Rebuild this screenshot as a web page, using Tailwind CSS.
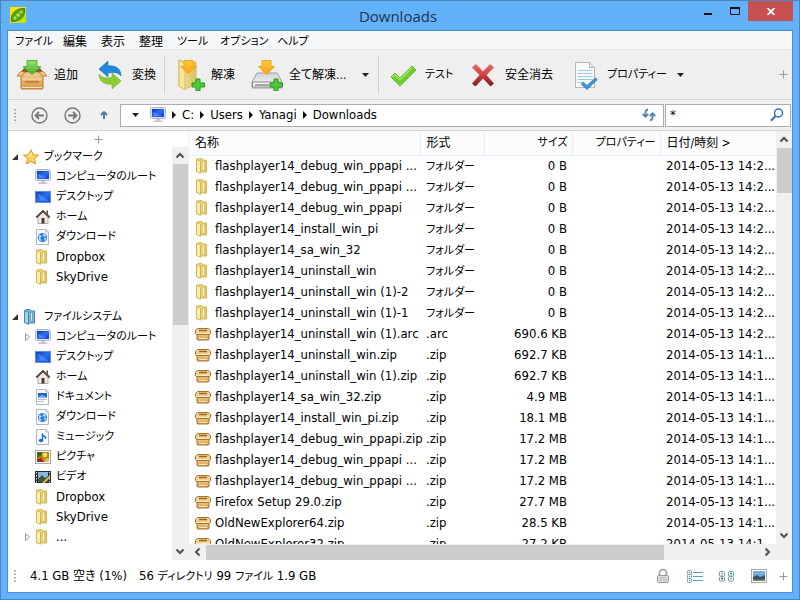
<!DOCTYPE html>
<html lang="ja">
  <head>
    <meta charset="UTF-8" />
    <meta name="viewport" content="width=device-width, initial-scale=1.0" />
    <title>Downloads</title>
    <script src="https://cdn.jsdelivr.net/npm/@tailwindcss/browser@4"></script>
  </head>
  <body class="h-screen overflow-hidden bg-[#64b1fb] border border-[#4a87bd] px-[6px] pb-[6px] flex flex-col text-black text-[13px] leading-5 font-['DejaVu_Sans_Condensed','Noto_Sans','Noto_Sans_CJK_JP',sans-serif] [font-feature-settings:'palt']">

    <!-- Shared icons -->
    <svg class="absolute w-0 h-0">
      <defs>
        <linearGradient id="gFolder" x1="0" y1="0" x2="1" y2="0"><stop offset="0" stop-color="#f5e7a4" /><stop offset="1" stop-color="#dcbf5c" /></linearGradient>
        <linearGradient id="gBox" x1="0" y1="0" x2="0" y2="1"><stop offset="0" stop-color="#f3cd90" /><stop offset="1" stop-color="#d99a4c" /></linearGradient>
        <linearGradient id="gScreen" x1="0" y1="0" x2="1" y2="1"><stop offset="0" stop-color="#0a35b8" /><stop offset=".5" stop-color="#2f6ff0" /><stop offset="1" stop-color="#0a3fd0" /></linearGradient>
        <linearGradient id="gGreen" x1="0" y1="0" x2="0" y2="1"><stop offset="0" stop-color="#9be06c" /><stop offset="1" stop-color="#3fae25" /></linearGradient>
        <linearGradient id="gOrange" x1="0" y1="0" x2="0" y2="1"><stop offset="0" stop-color="#ffcb3d" /><stop offset="1" stop-color="#ff9d14" /></linearGradient>
        <linearGradient id="gRed" x1="0" y1="0" x2="0" y2="1"><stop offset="0" stop-color="#e86a6a" /><stop offset=".5" stop-color="#d04040" /><stop offset="1" stop-color="#7e1b1b" /></linearGradient>
        <linearGradient id="gDisk" x1="0" y1="0" x2="0" y2="1"><stop offset="0" stop-color="#d2d2d2" /><stop offset="1" stop-color="#fbfbfb" /></linearGradient>
      </defs>
      <symbol id="folder" viewBox="0 0 16 16">
        <path d="M1.500 1.500l2-1h3.500v1.500h4.500v12h-7l-3-1z" fill="url(#gFolder)" stroke="#d6bb58" />
        <path d="M1.500 1.500l4 1.500v12.300l-4-1.800z" fill="#f8ecb4" stroke="#d3b54c" />
        <path d="M7.500 3v8.500l2 1.500V4z" fill="#fbf3cc" stroke="#d9bf62" stroke-width=".6" />
      </symbol>
      <symbol id="bluefolder" viewBox="0 0 16 16">
        <path d="M1.500 1.500l2-1h3.500v1.500h4.500v12h-7l-3-1z" fill="#7fb6d8" stroke="#4486ad" />
        <path d="M1.500 1.500l4 1.500v12.300l-4-1.800z" fill="#a8d0e8" stroke="#4486ad" />
        <path d="M7.500 3v8.500l2 1.500V4z" fill="#d3ecf8" stroke="#4486ad" stroke-width=".6" />
      </symbol>
      <symbol id="archive" viewBox="0 0 16 16">
        <path d="M2 7.500h12v5.500q0 1-1 1H3q-1 0-1-1z" fill="url(#gBox)" stroke="#a8742c" />
        <path d="M2.500 2.500h11l2 2v3l-1 1h-13l-1-1v-3z" fill="#f2cf96" stroke="#a8742c" />
        <path d="M4 4.500h8" stroke="#9a641c" stroke-width="1.500" />
        <path d="M2 7.500h12M4 12.500h8" stroke="#fbe8c4" />
      </symbol>
      <symbol id="monitor" viewBox="0 0 16 16">
        <rect x=".5" y=".5" width="15" height="11" rx="1" fill="#dfe3ea" stroke="#b4bac4" />
        <rect x="2" y="2" width="12" height="8" fill="url(#gScreen)" />
        <path d="M3 5l4 2 5 2H4z" fill="#5b9bff" opacity=".6" />
        <path d="M6 12h4v1.500h2.500V15h-9v-1.500H6z" fill="#c3c7cd" />
      </symbol>
      <symbol id="desktop" viewBox="0 0 16 16">
        <rect x=".5" y="2.500" width="15" height="11" fill="url(#gScreen)" stroke="#5d8fe0" />
        <path d="M2 4l6 4 6 4H6z" fill="#5b9bff" opacity=".6" />
      </symbol>
      <symbol id="home" viewBox="0 0 16 16">
        <path d="M3 7l5-4.500L13 7v7.500H3z" fill="#efebe4" stroke="#a39c92" stroke-width=".8" />
        <rect x="6.500" y="9" width="3" height="5.500" fill="#4a3e35" />
        <path d="M1.300 8.500L8 2l6.700 6.500" fill="none" stroke="#54463d" stroke-width="1.800" />
        <path d="M11.500 1.500h1.500v4l-1.500-1.500z" fill="#54463d" />
      </symbol>
      <symbol id="page" viewBox="0 0 16 16">
        <path d="M1.500.5h9.500l2.500 2.500v12.500h-12z" fill="#f7f9fb" stroke="#b3b8be" />
        <path d="M11 .5V3h2.500" fill="#dde1e6" stroke="#b3b8be" />
      </symbol>
      <symbol id="download" viewBox="0 0 16 16">
        <use href="#page" />
        <circle cx="7.500" cy="8.500" r="4.600" fill="#2e7fdc" />
        <path d="M4 6l3 1-2 2 2 3-3-1zM8 4.500l3 1.500-1 2-2-1zM9 9l2.500-.5L10 12z" fill="#b7e0fb" />
      </symbol>
      <symbol id="document" viewBox="0 0 16 16">
        <use href="#page" />
        <rect x="3" y="4" width="9" height="4.500" fill="#1f62c8" />
        <path d="M3 8l4-2 5 2z" fill="#79b4f0" />
        <path d="M3 10.500h9M3 12.500h6" stroke="#a8c2dc" />
      </symbol>
      <symbol id="music" viewBox="0 0 16 16">
        <use href="#page" />
        <path d="M7.500 4.500v7M7.500 4.500q0 2.500 3 3.500v2" fill="none" stroke="#1670d8" stroke-width="1.400" />
        <ellipse cx="6" cy="11.500" rx="2.200" ry="1.700" fill="#1670d8" />
      </symbol>
      <symbol id="picture" viewBox="0 0 16 16">
        <rect x=".5" y="1.500" width="15" height="13" fill="#fff" stroke="#a9a9a9" />
        <rect x="2" y="3" width="12" height="10" fill="#b98a12" />
        <path d="M2 3h5l-1 4-4 2z" fill="#3c6a10" />
        <circle cx="10" cy="6" r="2.300" fill="#ffe45a" />
        <path d="M2 13v-3l4-1 3 4z" fill="#a3281c" /><path d="M9 13l2-4 3 1v3z" fill="#d8c05a" />
      </symbol>
      <symbol id="video" viewBox="0 0 16 16">
        <rect y="2" width="16" height="12" fill="#26282b" />
        <rect x="3" y="3" width="10" height="10" fill="#8db6e4" />
        <path d="M3 10l4-4 3 3 3-2v6H3z" fill="#3c5a3a" />
        <path d="M1.500 3v11M14.500 3v11" stroke="#e8e8e8" stroke-dasharray="1.500 1.500" />
        <path d="M7 14l7-7 1.500 1.500-6 5.500z" fill="#e3b64c" />
      </symbol>
      <symbol id="star" viewBox="0 0 16 16">
        <path d="M8 .8l2.200 4.900 5.300.5-4 3.500 1.200 5.300L8 12.300 3.300 15l1.200-5.300-4-3.500 5.300-.5z" fill="#fdd45c" stroke="#d9962a" />
        <path d="M8 2.800l1.400 3.800-3.400.8z" fill="#fff1b0" />
      </symbol>
      <symbol id="crumb" viewBox="0 0 4 8"><path d="M0 0l4 4-4 4z" fill="#111" /></symbol>
      <symbol id="caret" viewBox="0 0 7 4"><path d="M0 0h7L3.500 4z" fill="#222" /></symbol>
      <symbol id="plus" viewBox="0 0 9 9"><path d="M4.500 0.500v8M.5 4.500h8" stroke="#8b9bab" /></symbol>
      <symbol id="grip" viewBox="0 0 2 12"><path d="M1 0v12" stroke="#8c8c8c" stroke-width="1.500" stroke-dasharray="1.500 2" /></symbol>
      <symbol id="chevron" viewBox="0 0 10 10"><path d="M1.500 7L5 3.500 8.500 7" fill="none" stroke="#505050" stroke-width="2" /></symbol>
    </svg>

    <!-- Title bar -->
    <header class="relative h-[29px] shrink-0 flex items-start">
      <svg class="w-4 h-4 mt-1.5 ml-[3px]" viewBox="0 0 16 16">
        <rect width="16" height="16" fill="#c6e60a" /><path d="M0 0h16L0 16z" fill="#ffe400" />
        <path d="M1.500 14.500C0 7 6 1 14.500 1.500 16 9 10 15 1.500 14.500z" fill="#5aa512" stroke="#3c8408" />
        <g fill="#b6e34a"><circle cx="5" cy="11" r="1.600" /><circle cx="8" cy="8" r="1.800" /><circle cx="11" cy="5" r="1.500" /></g>
      </svg>
      <h1 class="absolute inset-x-0 top-[5px] pr-1 text-center text-[15px] leading-5 text-[#1e3448] font-['Open_Sans',sans-serif]">Downloads</h1>
      <div class="relative ml-auto flex">
        <button aria-label="最小化" class="w-[27px] h-5 flex justify-center items-center"><svg class="w-2 h-2" viewBox="0 0 8 8"><path d="M0 7h8" stroke="#111" stroke-width="2" /></svg></button>
        <button aria-label="最大化" class="w-[27px] h-5 flex justify-center items-center"><svg class="w-[10px] h-2" viewBox="0 0 10 8"><path d="M.5 1v6.500h9V1" fill="none" stroke="#111" /><path d="M0 1h10" stroke="#111" stroke-width="2" /></svg></button>
        <button aria-label="閉じる" class="w-[45px] h-5 bg-[#c75050] flex justify-center items-center"><svg class="w-2 h-[7px]" viewBox="0 0 8 7"><path d="M.5 0l7 7M7.500 0l-7 7" stroke="#fff" stroke-width="1.800" /></svg></button>
      </div>
    </header>

    <div class="flex-1 min-h-0 flex flex-col bg-white border border-[#4a90d0]">
      <!-- Menu -->
      <nav class="h-[18px] shrink-0 bg-[#f5f6f7] flex items-center px-[7px] pt-[3px] gap-[14px] text-[12px] whitespace-nowrap">
        <button class="w-[34px] text-[11px]">ファイル</button>
        <button>編集</button>
        <button>表示</button>
        <button>整理</button>
        <button class="w-[29px] text-[11px]">ツール</button>
        <button class="w-[43px] text-[11px]">オプション</button>
        <button class="w-[29px] text-[11px]">ヘルプ</button>
      </nav>

      <!-- Toolbar -->
      <div class="h-[50px] shrink-0 bg-[#efefef] border-t border-[#e6e6e6] flex items-center text-[12px] whitespace-nowrap">
        <button class="flex items-center gap-1.5 px-2">
          <svg class="w-8 h-8" viewBox="0 0 32 32">
            <path d="M5 13h22v16q0 1-1 1H6q-1 0-1-1z" fill="url(#gBox)" stroke="#b97a36" />
            <path d="M5 13l3-4h16l3 4z" fill="#8f5a24" />
            <path d="M5 12.500L1 17h5l3-4zM27 12.500l4 4.500h-5l-3-4z" fill="#f0c98f" stroke="#b97a36" />
            <path d="M6 20h20M6 28.500h20" stroke="#f9dfb2" /><path d="M9 23h14" stroke="#c8863e" stroke-width="2" />
            <path d="M11 1.500h10v6h4L16 15.500l-9-8h4z" fill="url(#gGreen)" stroke="#55b53a" />
          </svg>
          追加
        </button>
        <button class="flex items-center gap-1.5 px-2">
          <svg class="w-8 h-8" viewBox="0 0 32 32">
            <path d="M5 10l9-8v5c8-1 13 3 13 10-3-4-7-4-13-3v4z" fill="#2089dd" stroke="#0f6fc0" stroke-width=".6" />
            <path d="M27 22l-9 8v-5c-8 1-13-3-13-10 3 4 7 4.500 13 3.500V14z" fill="#8bcc35" stroke="#6fb01e" stroke-width=".6" />
          </svg>
          変換
        </button>
        <i class="w-px h-[38px] bg-[#d2d2d2]"></i>
        <button class="flex items-center gap-1.5 px-2">
          <svg class="w-8 h-8" viewBox="0 0 32 32">
            <path d="M6 1l6 2h11v23l-12 4-5-3z" fill="url(#gFolder)" stroke="#d6bb58" />
            <path d="M6 1l6 4v26l-6-4z" fill="#f8e6a0" stroke="#dcbc5c" />
            <path d="M11 1.500h9v6h3.500L15.500 14.500 7.500 7.500H11z" fill="url(#gOrange)" stroke="#f0a41c" />
            <path d="M23 20h4v4h4.500v4H27v4h-4v-4h-4v-4h4z" fill="#4ecb35" stroke="#259a1a" />
          </svg>
          解凍
        </button>
        <button class="flex items-center gap-1.5 px-2">
          <svg class="w-8 h-8" viewBox="0 0 32 32">
            <path d="M6 14h20l5 9v5q0 1-1 1H2q-1 0-1-1v-5z" fill="url(#gDisk)" stroke="#9c9c9c" />
            <path d="M1.500 23h29v5h-29z" fill="#f7f7f7" stroke="#8b8b8b" /><path d="M4 26h14" stroke="#555" />
            <path d="M11 1.500h9v6h3.500L15.500 15.500 7.500 7.500H11z" fill="url(#gOrange)" stroke="#f0a41c" />
            <path d="M23 20h4v4h4.500v4H27v4h-4v-4h-4v-4h4z" fill="#4ecb35" stroke="#259a1a" />
          </svg>
          <span class="w-14 text-left">全て解凍...</span>
        </button>
        <button aria-label="解凍メニュー" class="w-[25px] flex justify-center"><svg class="w-[7px] h-1"><use href="#caret" /></svg></button>
        <i class="w-px h-[38px] bg-[#d2d2d2]"></i>
        <button class="flex items-center gap-1.5 px-2">
          <svg class="w-8 h-8" viewBox="0 0 32 32"><path d="M4 18l4-4 5 5L25 7l4 4-16 16z" fill="#6fcf2a" stroke="#4fa81a" stroke-width=".8" /><path d="M5.500 18L8 15.500l5 5L25 8.500" fill="none" stroke="#a3e86a" stroke-width="1.500" /></svg>
          <span class="w-[26px] text-[11px] text-left">テスト</span>
        </button>
        <button class="flex items-center gap-1.5 px-2">
          <svg class="w-8 h-8" viewBox="0 0 32 32"><path d="M9 5l7 7.500L23 5l4 3.500-7.500 7.500 7.500 8.500-3.500 3L16 19.500 8.500 27.500 5 24.500l7.500-8.500L5 8.500z" fill="url(#gRed)" /></svg>
          安全消去
        </button>
        <button class="flex items-center gap-1.5 px-2">
          <svg class="w-8 h-8" viewBox="0 0 32 32">
            <path d="M6.500 3.500h14l5 5v20h-19z" fill="#fafafa" stroke="#b5b5b5" /><path d="M20.500 3.500v5h5" fill="#e4e4e4" stroke="#b5b5b5" />
            <path d="M8.500 11.500h15M8.500 14.500h15M8.500 17.500h15M8.500 20.500h15M8.500 23.500h7" stroke="#9dc8e4" />
            <path d="M13 24l5 4.500 9.500-9" fill="none" stroke="#3f90cc" stroke-width="3.500" />
          </svg>
          <span class="w-[53px] text-[11px] text-left">プロパティー</span>
        </button>
        <button aria-label="プロパティーメニュー" class="w-[25px] flex justify-center"><svg class="w-[7px] h-1"><use href="#caret" /></svg></button>
        <button aria-label="追加ボタン" class="ml-auto mr-1"><svg class="w-[9px] h-[9px]"><use href="#plus" /></svg></button>
      </div>

      <!-- Address bar -->
      <div class="h-8 shrink-0 bg-[#f0f0f0] border-y border-[#d5d5d5] flex items-center pr-px">
        <svg class="w-0.5 h-3 ml-1.5 mr-[15px]"><use href="#grip" /></svg>
        <button aria-label="戻る" class="mr-4"><svg class="w-[17px] h-[17px]" viewBox="0 0 17 17" fill="none" stroke="#777"><circle cx="8.500" cy="8.500" r="7.500" stroke-width="1.400" /><path d="M13 8.500H5M8 5L4.500 8.500 8 12" stroke-width="1.800" /></svg></button>
        <button aria-label="進む" class="mr-[19px]"><svg class="w-[17px] h-[17px]" viewBox="0 0 17 17" fill="none" stroke="#777"><circle cx="8.500" cy="8.500" r="7.500" stroke-width="1.400" /><path d="M4 8.500h8M9 5l3.500 3.500L9 12" stroke-width="1.800" /></svg></button>
        <button aria-label="上へ" class="mr-3"><svg class="w-2 h-2" viewBox="0 0 8 8"><path d="M4 8V1M1 4l3-3 3 3" fill="none" stroke="#3c78a8" stroke-width="1.800" /></svg></button>
        <div class="flex-1 h-[23px] bg-white border border-[#abadb3] flex items-center">
          <button aria-label="履歴" class="ml-[11px] mr-[11px]"><svg class="w-[7px] h-1"><use href="#caret" /></svg></button>
          <svg class="w-4 h-4 mr-1.5"><use href="#monitor" /></svg>
          <div class="flex items-center gap-1.5">
            <svg class="w-1 h-2"><use href="#crumb" /></svg><a href="#">C:</a>
            <svg class="w-1 h-2"><use href="#crumb" /></svg><a href="#">Users</a>
            <svg class="w-1 h-2"><use href="#crumb" /></svg><a href="#">Yanagi</a>
            <svg class="w-1 h-2"><use href="#crumb" /></svg><a href="#">Downloads</a>
          </div>
          <button aria-label="更新" class="ml-auto mr-[7px]">
            <svg class="w-[14px] h-[14px]" viewBox="0 0 14 14" fill="none" stroke="#5583b5" stroke-width="1.800"><path d="M6 1.500Q3.500 2 3.500 5v3M.8 6l2.700 2.700L6.200 6" /><path d="M8 12.500q2.500-.5 2.500-3.500V6M7.800 8l2.700-2.700L13.200 8" /></svg>
          </button>
        </div>
        <label class="w-[126px] h-[23px] ml-px bg-white border border-[#abadb3] flex items-center px-1">
          <input type="text" value="*" aria-label="検索" class="flex-1 min-w-0 outline-none" />
          <svg class="w-[14px] h-[14px] mr-0.5" viewBox="0 0 14 14" fill="none" stroke="#3470b4"><circle cx="8.500" cy="5" r="4" stroke-width="1.500" /><path d="M5.500 8L1 12.800" stroke-width="2" /></svg>
        </label>
      </div>

      <div class="flex-1 min-h-0 flex">
        <!-- Folder tree -->
        <aside class="w-[181px] shrink-0 flex flex-col border-r border-[#f0f0f0]">
          <button aria-label="タブを追加" class="h-4 shrink-0 flex justify-center items-center"><svg class="w-[9px] h-[9px]"><use href="#plus" /></svg></button>
          <div class="flex-1 min-h-0 flex">
            <ul id="tree" class="flex-1 min-w-0 overflow-hidden"></ul>
            <div class="w-4 bg-[#f0f0f0] flex flex-col items-center">
              <svg class="w-[10px] h-[17px] shrink-0"><use href="#chevron" /></svg>
              <div class="w-[15px] h-[39%] bg-[#cdcdcd]"></div>
              <svg class="w-[10px] h-[17px] shrink-0 mt-auto rotate-180"><use href="#chevron" /></svg>
            </div>
          </div>
        </aside>

        <!-- File list -->
        <main class="flex-1 min-w-0 flex flex-col">
          <div class="flex-1 min-h-0 flex">
            <div class="flex-1 min-w-0 overflow-hidden">
              <table class="w-full table-fixed whitespace-nowrap">
                <colgroup><col /><col class="w-16" /><col class="w-[88px]" /><col class="w-[88px]" /><col class="w-[116px]" /></colgroup>
                <thead>
                  <tr class="h-6 bg-[#fcfcfc] border-b border-[#e2effc] text-[12px]">
                    <th class="border-r border-[#e2effc] pl-1.5 text-left font-normal">名称</th>
                    <th class="border-r border-[#e2effc] pl-1.5 text-left font-normal">形式</th>
                    <th class="border-r border-[#e2effc] pr-1 text-right font-normal text-[11px]">サイズ</th>
                    <th class="border-r border-[#e2effc] pr-1 text-right font-normal text-[11px]">プロパティー</th>
                    <th class="pl-1.5 text-left font-normal">日付/時刻 &gt;</th>
                  </tr>
                </thead>
                <tbody id="files"></tbody>
              </table>
            </div>
            <div class="w-4 bg-[#f0f0f0] flex flex-col items-center">
              <svg class="w-[10px] h-[17px] shrink-0"><use href="#chevron" /></svg>
              <div class="w-[15px] h-[11%] bg-[#cdcdcd]"></div>
              <svg class="w-[10px] h-[17px] shrink-0 mt-auto rotate-180"><use href="#chevron" /></svg>
            </div>
          </div>
          <div class="h-4 shrink-0 bg-[#f0f0f0] flex items-center">
            <svg class="w-[17px] h-[10px] shrink-0 -rotate-90"><use href="#chevron" /></svg>
            <div class="w-[76%] h-[15px] bg-[#cdcdcd]"></div>
            <svg class="w-[17px] h-[10px] shrink-0 ml-auto mr-4 rotate-90"><use href="#chevron" /></svg>
          </div>
        </main>
      </div>

      <!-- Status bar -->
      <footer class="h-8 shrink-0 flex items-center pr-1 whitespace-nowrap">
        <svg class="w-0.5 h-3 ml-1.5 mr-[14px]"><use href="#grip" /></svg>
        <span class="mr-3">4.1 GB <span class="text-[12px]">空き</span> (1%)</span>
        <span>56 <span class="text-[11px]">ディレクトリ</span> 99 <span class="text-[11px]">ファイル</span> 1.9 GB</span>
        <div class="ml-auto mr-3 flex items-center gap-4">
          <button aria-label="パスワード"><svg class="w-4 h-4" viewBox="0 0 16 16"><path d="M4.500 7V5a3.500 3.500 0 017 0v2" fill="none" stroke="#9a9a9a" stroke-width="1.600" /><rect x="2.500" y="7.500" width="11" height="7" rx="1" fill="#dcdcdc" stroke="#9a9a9a" /><path d="M4 10h8M4 12h8" stroke="#bdbdbd" /></svg></button>
          <button aria-label="詳細表示"><svg class="w-4 h-4" viewBox="0 0 16 16" fill="#fff" stroke="#5ba3bd"><rect x=".5" y="2.500" width="4" height="4" rx="1" /><rect x=".5" y="6.500" width="4" height="4" rx="1" /><rect x=".5" y="10.500" width="4" height="4" rx="1" /><path d="M6 4.500h10M6 8.500h10M6 12.500h10" /><path d="M2 4.500h1" stroke="#e02020" /><path d="M2 8.500h1" stroke="#30a030" /><path d="M2 12.500h1" stroke="#2050d0" /></svg></button>
          <button aria-label="アイコン表示"><svg class="w-4 h-4" viewBox="0 0 16 16" fill="#fff" stroke="#5ba3bd"><rect x=".5" y="3.500" width="5" height="4.500" rx="1" /><rect x=".5" y="8.500" width="5" height="4.500" rx="1" /><rect x="9.500" y="3.500" width="5" height="4.500" rx="1" /><rect x="9.500" y="8.500" width="5" height="4.500" rx="1" /><path d="M2 5.500h2M11 10.500h2" stroke="#d0a020" stroke-width="1.500" /><path d="M2 10.500h2" stroke="#c02020" stroke-width="1.500" /><path d="M11 5.500h2" stroke="#30a030" stroke-width="1.500" /></svg></button>
          <button aria-label="プレビュー"><svg class="w-4 h-4" viewBox="0 0 16 16"><rect x=".5" y="1.500" width="15" height="13" fill="#fff" stroke="#a9a9a9" /><rect x="2" y="3" width="12" height="10" fill="#78aae4" /><path d="M2 9l4-2 3 2 5-2v6H2z" fill="#34506e" /><path d="M2 11.500h12V13H2z" fill="#77923a" /></svg></button>
        </div>
        <button aria-label="ボタンを追加"><svg class="w-[9px] h-[9px]"><use href="#plus" /></svg></button>
      </footer>
    </div>

    <script>
      // [level, icon, label, arrow]
      const tree = [
        [0, 'star', 'ブックマーク', 'open'],
        [1, 'monitor', 'コンピュータのルート'],
        [1, 'desktop', 'デスクトップ'],
        [1, 'home', 'ホーム'],
        [1, 'download', 'ダウンロード'],
        [1, 'folder', 'Dropbox'],
        [1, 'folder', 'SkyDrive'],
        null,
        [0, 'bluefolder', 'ファイルシステム', 'open'],
        [1, 'monitor', 'コンピュータのルート', 'closed'],
        [1, 'desktop', 'デスクトップ'],
        [1, 'home', 'ホーム'],
        [1, 'document', 'ドキュメント'],
        [1, 'download', 'ダウンロード'],
        [1, 'music', 'ミュージック'],
        [1, 'picture', 'ピクチャ'],
        [1, 'video', 'ビデオ'],
        [1, 'folder', 'Dropbox'],
        [1, 'folder', 'SkyDrive'],
        [1, 'folder', '...', 'closed'],
      ];
      const arrows = {
        open: '<path d="M6 1v6H0z" fill="#333" />',
        closed: '<path d="M1.500 .5v7L5.500 4z" fill="#fff" stroke="#999" />',
      };

      document.getElementById('tree').innerHTML = tree.map(row => {
        if (!row) return '<li class="h-5"></li>';
        const [level, icon, label, arrow] = row;
        const indent = level ? 'pl-4' : 'pl-1';
        const size = /^[\x00-\x7f]+$/.test(label) ? 'text-[13px]' : 'text-[11px]';
        return `<li class="h-5 flex items-center gap-[5px] ${indent} whitespace-nowrap ${size}">
          <svg class="w-[6px] h-2 shrink-0" viewBox="0 0 6 8">${arrow ? arrows[arrow] : ''}</svg>
          <svg class="w-4 h-4 shrink-0"><use href="#${icon}" /></svg>
          <span>${label}</span>
        </li>`;
      }).join('');

      // [name, type, size, time]
      const files = [
        ['flashplayer14_debug_win_ppapi ...', '', '0 B', '2'],
        ['flashplayer14_debug_win_ppapi ...', '', '0 B', '2'],
        ['flashplayer14_debug_win_ppapi', '', '0 B', '2'],
        ['flashplayer14_install_win_pi', '', '0 B', '2'],
        ['flashplayer14_sa_win_32', '', '0 B', '2'],
        ['flashplayer14_uninstall_win', '', '0 B', '2'],
        ['flashplayer14_uninstall_win (1)-2', '', '0 B', '2'],
        ['flashplayer14_uninstall_win (1)-1', '', '0 B', '2'],
        ['flashplayer14_uninstall_win (1).arc', '.arc', '690.6 KB', '2'],
        ['flashplayer14_uninstall_win.zip', '.zip', '692.7 KB', '1'],
        ['flashplayer14_uninstall_win (1).zip', '.zip', '692.7 KB', '1'],
        ['flashplayer14_sa_win_32.zip', '.zip', '4.9 MB', '1'],
        ['flashplayer14_install_win_pi.zip', '.zip', '18.1 MB', '1'],
        ['flashplayer14_debug_win_ppapi.zip', '.zip', '17.2 MB', '1'],
        ['flashplayer14_debug_win_ppapi ...', '.zip', '17.2 MB', '1'],
        ['flashplayer14_debug_win_ppapi ...', '.zip', '17.2 MB', '1'],
        ['Firefox Setup 29.0.zip', '.zip', '27.7 MB', '1'],
        ['OldNewExplorer64.zip', '.zip', '28.5 KB', '1'],
        ['OldNewExplorer32.zip', '.zip', '27.2 KB', '1'],
      ];

      document.getElementById('files').innerHTML = files.map(([name, type, size, time]) => `
        <tr class="h-[21px]">
          <td><div class="flex items-center gap-1 pl-1.5"><svg class="w-4 h-4 shrink-0"><use href="#${type ? 'archive' : 'folder'}" /></svg><span>${name}</span></div></td>
          <td class="pl-1.5">${type || '<span class="text-[11px]">フォルダー</span>'}</td>
          <td class="pr-[5px] text-right">${size}</td>
          <td></td>
          <td class="pl-1.5">2014-05-13 14:${time}...</td>
        </tr>`).join('');
    </script>
  </body>
</html>
